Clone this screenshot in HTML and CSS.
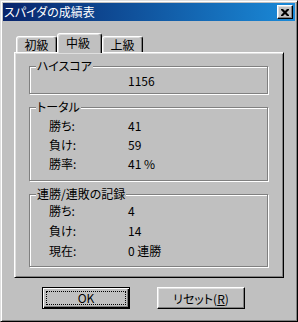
FILE: index.html
```html
<!DOCTYPE html>
<html lang="ja">
<head>
  <meta charset="UTF-8">
  <title>スパイダの成績表</title>
  <link rel="stylesheet" href="styles.css">
</head>
<body>
  <div class="window">
    <div class="titlebar">
      <span class="title">スパイダの成績表</span>
      <button class="close" aria-label="閉じる">
        <svg width="8" height="7" viewBox="0 0 8 7">
          <path d="M0 0h2l2 2 2-2h2v1l-2.5 2.5L8 6v1H6L4 5 2 7H0V6l2.5-2.5L0 1z" fill="#000"/>
        </svg>
      </button>
    </div>

    <div class="tabs">
      <div class="tab">初級</div>
      <div class="tab active">中級</div>
      <div class="tab">上級</div>
    </div>

    <div class="panel">
      <fieldset class="group group-high">
        <legend>ハイスコア</legend>
        <div class="row"><span></span><span>1156</span></div>
      </fieldset>

      <fieldset class="group group-total">
        <legend>トータル</legend>
        <div class="row"><span>勝ち:</span><span>41</span></div>
        <div class="row"><span>負け:</span><span>59</span></div>
        <div class="row"><span>勝率:</span><span>41&nbsp;%</span></div>
      </fieldset>

      <fieldset class="group group-streak">
        <legend>連勝/連敗の記録</legend>
        <div class="row"><span>勝ち:</span><span>4</span></div>
        <div class="row"><span>負け:</span><span>14</span></div>
        <div class="row"><span>現在:</span><span>0 連勝</span></div>
      </fieldset>
    </div>

    <div class="buttons">
      <button class="btn default"><span class="focus">OK</span></button>
      <button class="btn">リセット(<u>R</u>)</button>
    </div>
  </div>
</body>
</html>
```

FILE: styles.css
```css
* {
  margin: 0;
  padding: 0;
  box-sizing: border-box;
}

body {
  background: #c0c0c0;
  font-family: 'Noto Sans CJK JP', 'Noto Sans', sans-serif;
  font-size: 12px;
  font-feature-settings: "palt";
  color: #000;
}

.window {
  width: 298px;
  height: 322px;
  display: flex;
  flex-direction: column;
  background: #c0c0c0;
  border: 1px solid;
  border-color: #dfdfdf #000 #000 #dfdfdf;
  box-shadow: inset 1px 1px #fff, inset -1px -1px #808080;
  padding: 2px;
}

.titlebar {
  height: 18px;
  display: flex;
  align-items: center;
  justify-content: space-between;
  padding: 0 2px 0 1px;
  background: linear-gradient(90deg, #08246b, #1a8ad8);
  color: #fff;
}

.title {
  line-height: 18px;
}

.close {
  width: 16px;
  height: 14px;
  display: flex;
  align-items: center;
  justify-content: center;
  background: #c0c0c0;
  border: 1px solid;
  border-color: #fff #000 #000 #fff;
  box-shadow: inset -1px -1px #808080, inset 1px 1px #dfdfdf;
}

.tabs {
  display: flex;
  align-items: flex-end;
  height: 19px;
  margin: 12px 0 0 13px;
  position: relative;
  z-index: 1;
}

.tab {
  width: 41px;
  height: 16px;
  line-height: 15px;
  text-align: center;
  background: #c0c0c0;
  border: 1px solid;
  border-bottom: none;
  border-color: #fff #000 transparent #fff;
  border-radius: 3px 3px 0 0;
  box-shadow: inset -1px 0 #808080, inset 1px 1px #dfdfdf;
}

.tab.active {
  width: 45px;
  height: 20px;
  line-height: 18px;
  margin-bottom: -1px;
  padding-right: 3px;
}

.panel {
  width: 270px;
  height: 226px;
  margin-left: 11px;
  padding: 6px 15px 0 14px;
  border: 1px solid;
  border-color: #fff #000 #000 #fff;
  box-shadow: inset 1px 1px #dfdfdf, inset -1px -1px #808080;
}

.group {
  width: 239px;
  border: 1px solid #808080;
  box-shadow: inset 1px 1px #fff, 1px 1px #fff;
  margin-bottom: 6px;
  padding: 0 0 5px 0;
}

.group legend {
  margin-left: 6px;
  padding: 0 1px;
  line-height: 14px;
  background: #c0c0c0;
}

.row {
  display: grid;
  grid-template-columns: 79px 1fr;
  height: 20px;
  line-height: 20px;
  padding-left: 19px;
}

.group-high .row {
  height: 15px;
  line-height: 15px;
}

.group-total {
  padding-top: 2px;
  padding-bottom: 7px;
}

.group-total .row {
  height: 19px;
  line-height: 19px;
}

.buttons {
  display: flex;
  gap: 27px;
  margin: 9px 0 0 39px;
}

.btn {
  width: 88px;
  height: 22px;
  font: inherit;
  font-feature-settings: "palt";
  background: #c0c0c0;
  border: 1px solid;
  border-color: #fff #000 #000 #fff;
  box-shadow: inset -1px -1px #808080, inset 1px 1px #dfdfdf;
}

.btn.default {
  border-color: #000;
  box-shadow: inset 1px 1px #fff, inset -1px -1px #000, inset -2px -2px #808080;
  padding: 3px;
}

.focus {
  display: block;
  height: 100%;
  line-height: 12px;
  border: 1px dotted #000;
}
```
